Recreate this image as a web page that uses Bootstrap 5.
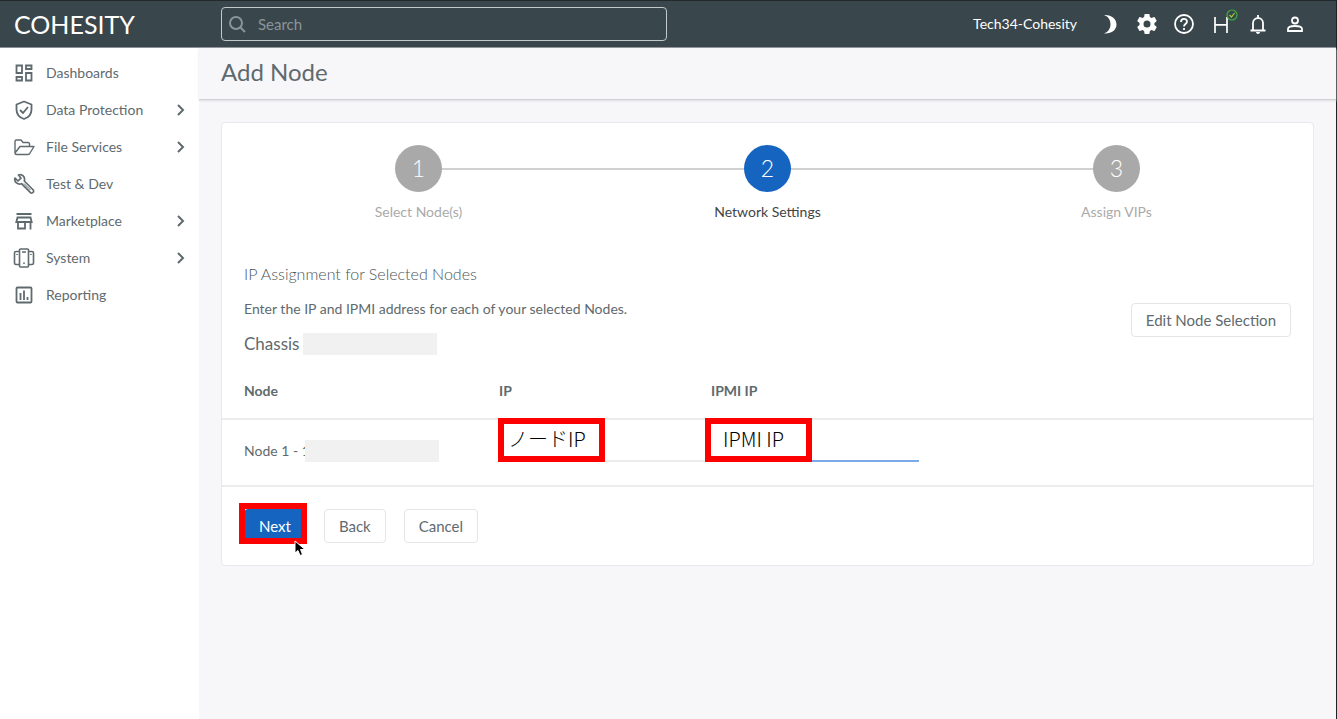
<!DOCTYPE html>
<html lang="en">
<head>
<meta charset="utf-8">
<meta name="viewport" content="width=device-width, initial-scale=1">
<title>Add Node</title>
<link href="https://cdn.jsdelivr.net/npm/bootstrap@5.3.0/dist/css/bootstrap.min.css" rel="stylesheet">
<style>
  body { font-family: Lato, "Noto Sans CJK JP", sans-serif; font-size: 14px; line-height: 20px; color: #5f6a6e; background: #f7f7fa; }
  .shell { border-right: 1px solid #222; }
  .topbar { height: 48px; background: #39464c; border-top: 1px solid #23282b; border-bottom: 1px solid #8b9095; }
  .brand-area { width: 221px; padding-left: 14px; }
  .brand-link { font-size: 25px; line-height: 32px; color: #fff; text-decoration: none; }
  .search-box { width: 446px; height: 34px; border: 1px solid #c3c8ca; border-radius: 4px; color: #8b9599; padding-left: 6px; }
  .search-box input { background: transparent; border: 0; outline: 0; color: #fff; font-size: 15px; padding: 0; }
  .search-box input::placeholder { color: #8b9599; opacity: 1; }
  .top-tools { gap: 13px; padding-right: 29px; color: #fff; }
  .tool-btn { width: 24px; height: 24px; padding: 0; border: 0; background: none; color: #fff; line-height: 0; }
  .ok-mark { top: -3px; right: -5px; }
  .sidebar { width: 199px; background: #fff; padding-top: 6px; }
  .sidebar a { height: 37px; padding: 0 10px 0 13px; color: #5f6a6e; text-decoration: none; }
  .nav-icon { width: 22px; height: 22px; margin-right: 11px; }
  .page-head { height: 52px; padding: 8px 22px; border-bottom: 1px solid #cfd1d3; box-shadow: 0 1px 2px #dcdde0; }
  .page-head h1 { font-size: 24px; line-height: 32px; margin: 0; font-weight: 400; }
  .panel { margin: 22px 22px 0; background: #fff; border: 1px solid #e9e9ec; border-radius: 4px; padding-top: 22px; }
  .steps { padding: 0 22px; list-style: none; margin: 0; }
  .steps li { flex: 1 1 0; color: #aaa; }
  .steps li::before, .steps li::after { content: ""; position: absolute; top: 23px; height: 2px; background: #d0d0d0; }
  .steps li::before { left: 0; right: 50%; }
  .steps li::after { left: 50%; right: 0; }
  .steps li:first-child::before, .steps li:last-child::after { display: none; }
  .step-dot { width: 47px; height: 47px; background: #a9a9a9; color: #fff; font-size: 23px; line-height: 24px; padding-bottom: 2px; font-weight: 300; z-index: 1; margin-bottom: 10px; }
  .steps .current { color: #3f4548; }
  .current .step-dot { background: #1565c0; }
  .intro { padding: 41px 22px 0; }
  .intro h2 { font-size: 16px; line-height: 22px; font-weight: 300; color: #4b565a; margin: 0 0 14px; }
  .intro p { margin: 0 0 14px; }
  .intro h3 { font-size: 17px; line-height: 22px; margin: 0; font-weight: 400; }
  .intro .plain-btn { margin-bottom: 18px; }
  .masked { width: 134px; height: 22px; background: #f1f1f1; }
  .masked.serial { margin-left: -5px; }
  .plain-btn { height: 34px; padding: 0 14px; background: #fff; border: 1px solid #e6e6e8; border-radius: 4px; color: #5f6a6e; font-size: 15px; }
  .next-btn { background: #1565c0; border-color: #1565c0; color: #fff; }
  .node-table { table-layout: fixed; width: 100%; margin-top: 8px; }
  .node-table th, .node-table td { border-bottom: 2px solid #ececee; padding: 0 0 0 22px; }
  .node-table th { height: 56px; font-weight: 700; }
  .node-table td { height: 67px; padding-bottom: 4px; }
  .node-table .field-col { padding-left: 0; }
  .field-col input { display: block; width: 208px; height: 42px; border: 0; border-bottom: 2px solid #ededed; outline: 0; background: none; }
  .field-col .active-field { border-bottom-color: #7caae6; }
  .callout-box { left: -1px; top: -2px; width: 107px; height: 44px; padding-left: 4px; background: #fff; border: 6px solid #f00; color: #000; font-family: "Noto Sans CJK JP", sans-serif; font-weight: 300; font-size: 20px; line-height: 30px; }
  .callout-box.ipmi { left: -6px; padding-left: 12px; }
  .callout-ring { left: -5px; top: -6px; right: -1px; bottom: -1px; border: 6px solid #f00; pointer-events: none; }
  .pointer { left: 50px; top: 31px; }
  .actions { gap: 18px; padding: 22px; }
</style>
</head>
<body>
<div class="shell min-vh-100 d-flex flex-column">
  <header class="topbar d-flex align-items-center">
    <div class="brand-area"><a class="brand-link" href="#">COHESITY</a></div>
    <label class="search-box d-flex align-items-center">
      <svg width="18" height="18" viewBox="0 0 18 18" fill="none" stroke="currentColor" stroke-width="2" aria-hidden="true"><circle cx="8" cy="8" r="6"/><path d="M12.500 12.500l4.500 4.500"/></svg>
      <input class="flex-grow-1 ms-2 ps-1" type="search" placeholder="Search" aria-label="Search">
    </label>
    <div class="top-tools d-flex align-items-center ms-auto">
      <span class="me-2">Tech34-Cohesity</span>
      <button class="tool-btn" aria-label="Theme"><svg width="24" height="24" viewBox="0 0 24 24" fill="currentColor"><path d="M6 3c7.500-.5 12.500 4 12.500 9.500S13.500 22 6 21.500c4.500-1.600 6.500-5 6.500-9.200S10.500 4.700 6 3z"/></svg></button>
      <button class="tool-btn" aria-label="Settings"><svg width="24" height="24" viewBox="0 0 24 24" fill="currentColor"><path d="M19.430 12.980c.04-.32.070-.64.070-.98s-.03-.66-.070-.98l2.110-1.650c.19-.15.240-.42.120-.64l-2-3.460c-.12-.22-.39-.3-.61-.22l-2.490 1c-.52-.4-1.080-.73-1.690-.98l-.38-2.650C14.460 2.180 14.250 2 14 2h-4c-.25 0-.46.18-.49.420l-.38 2.650c-.61.250-1.170.590-1.690.980l-2.490-1c-.23-.09-.49 0-.61.220l-2 3.460c-.13.220-.07.490.120.640l2.110 1.650c-.04.320-.07.650-.07.980s.03.660.070.980l-2.110 1.650c-.19.150-.24.420-.12.640l2 3.460c.12.220.39.300.61.220l2.490-1c.52.400 1.080.730 1.690.980l.38 2.650c.03.240.24.420.49.420h4c.25 0 .46-.18.490-.42l.38-2.650c.61-.25 1.170-.59 1.690-.98l2.490 1c.23.090.49 0 .61-.22l2-3.460c.12-.22.070-.49-.12-.64l-2.110-1.650zM12 15.500a3.500 3.500 0 1 1 0-7 3.500 3.500 0 0 1 0 7z"/></svg></button>
      <button class="tool-btn" aria-label="Help"><svg width="24" height="24" viewBox="0 0 24 24" fill="none" stroke="currentColor" stroke-width="1.800"><circle cx="12" cy="12" r="9"/><path d="M9 10c0-4 6-4 6-.5 0 2.500-3 2.500-3 5M12 16v2"/></svg></button>
      <button class="tool-btn position-relative" aria-label="Helios connected"><svg width="24" height="24" viewBox="0 0 24 24" fill="none" stroke="currentColor" stroke-width="1.700"><path d="M6 5v16M18 5v16M6 12.800h12"/></svg><svg class="ok-mark position-absolute" width="12" height="12" viewBox="0 0 12 12" fill="none" stroke="#3fae3f" stroke-width="1.200"><circle cx="6" cy="6" r="5"/><path stroke="#a5c93a" d="M3.500 6l2 2 3-4"/></svg></button>
      <button class="tool-btn" aria-label="Notifications"><svg width="24" height="24" viewBox="0 0 24 24" fill="none" stroke="currentColor" stroke-width="1.800"><path d="M4.500 18.500h15M7 18v-7c0-6.500 10-6.500 10 0v7"/><path d="M12 3v3"/><path fill="currentColor" stroke="none" d="M10 20h4c0 2.500-4 2.500-4 0z"/></svg></button>
      <button class="tool-btn" aria-label="Account"><svg width="24" height="24" viewBox="0 0 24 24" fill="none" stroke="currentColor" stroke-width="1.800"><circle cx="12" cy="8.500" r="3"/><path d="M5 19v-2c0-4 14-4 14 0v2z"/></svg></button>
    </div>
  </header>

  <div class="d-flex flex-grow-1">
    <nav class="sidebar flex-shrink-0" aria-label="Main">
      <ul class="list-unstyled m-0">
        <li><a class="d-flex align-items-center" href="#"><svg class="nav-icon" viewBox="0 0 22 22" fill="none" stroke="currentColor" stroke-width="1.800" aria-hidden="true"><path d="M3.500 3.500h5.500v7.500H3.500zM13 3.500h5.500v3.500h-5.500zM3.500 15h5.500v3.500H3.500zM13 11h5.500v7.500h-5.500z"/></svg>Dashboards</a></li>
        <li><a class="d-flex align-items-center" href="#"><svg class="nav-icon" viewBox="0 0 22 22" fill="none" stroke="currentColor" stroke-width="1.800" stroke-linejoin="round" aria-hidden="true"><path d="M11 2.500l7.500 3v5c0 4.500-3 8-7.500 9.500-4.500-1.500-7.500-5-7.500-9.500v-5z"/><path d="M7 11l3 3 5-6"/></svg>Data Protection<svg class="ms-auto" width="16" height="16" viewBox="0 0 16 16" fill="none" stroke="currentColor" stroke-width="2" aria-hidden="true"><path d="M5 3l5 5-5 5"/></svg></a></li>
        <li><a class="d-flex align-items-center" href="#"><svg class="nav-icon" viewBox="0 0 22 22" fill="none" stroke="currentColor" stroke-width="1.400" stroke-linejoin="round" aria-hidden="true"><path d="M2 17V5.500Q2 4 3.500 4h4.500l2 2.500h5q1.500 0 1.500 1.500v2.500M2 17l5-6.500h14l-4 6.500q-.5 1.500-2 1.500H3.500q-1.500 0-1.500-1.500"/></svg>File Services<svg class="ms-auto" width="16" height="16" viewBox="0 0 16 16" fill="none" stroke="currentColor" stroke-width="2" aria-hidden="true"><path d="M5 3l5 5-5 5"/></svg></a></li>
        <li><a class="d-flex align-items-center" href="#"><svg class="nav-icon" viewBox="0 0 22 22" fill="none" stroke="currentColor" stroke-width="1.700" stroke-linejoin="round" aria-hidden="true"><path d="M5.500 2C9 .5 12.500 4 11.300 8l9 9q.7 1.500-.3 2.500t-2.500.2l-9-9C5 12 .8 9 2 5l3 3 3-2.800z"/><path d="M11 10.500l6.500 6.500" stroke-width="1"/></svg>Test &amp; Dev</a></li>
        <li><a class="d-flex align-items-center" href="#"><svg class="nav-icon" viewBox="0 0 22 22" fill="none" stroke="currentColor" stroke-width="1.800" aria-hidden="true"><path d="M3.500 4h15M4.500 7.500h13L18.700 12H3.300zM5 12v6.500h7V12M17.500 12v7.500"/></svg>Marketplace<svg class="ms-auto" width="16" height="16" viewBox="0 0 16 16" fill="none" stroke="currentColor" stroke-width="2" aria-hidden="true"><path d="M5 3l5 5-5 5"/></svg></a></li>
        <li><a class="d-flex align-items-center" href="#"><svg class="nav-icon" viewBox="0 0 22 22" fill="none" stroke="currentColor" stroke-width="1.600" stroke-linejoin="round" aria-hidden="true"><rect x="6.500" y="2" width="9" height="18" rx="1"/><path d="M6 4.500H3Q1.500 4.500 1.500 6v10q0 1.500 1.500 1.500h3M16 4.500h3q1.500 0 1.500 1.500v10q0 1.500-1.500 1.500h-3M9 5h4M11 15.500v1.500M4 7v1M18 7v1"/></svg>System<svg class="ms-auto" width="16" height="16" viewBox="0 0 16 16" fill="none" stroke="currentColor" stroke-width="2" aria-hidden="true"><path d="M5 3l5 5-5 5"/></svg></a></li>
        <li><a class="d-flex align-items-center" href="#"><svg class="nav-icon" viewBox="0 0 22 22" fill="none" stroke="currentColor" stroke-width="1.800" aria-hidden="true"><rect x="3.500" y="3.500" width="15" height="15" rx="1"/><path d="M7.500 9v7M11 6.500V16M14.500 13v3"/></svg>Reporting</a></li>
      </ul>
    </nav>

    <main class="flex-grow-1">
      <div class="page-head"><h1>Add Node</h1></div>
      <section class="panel">
        <ol class="steps d-flex text-center">
          <li class="position-relative d-flex flex-column align-items-center"><span class="step-dot rounded-circle d-flex align-items-center justify-content-center">1</span>Select Node(s)</li>
          <li class="current position-relative d-flex flex-column align-items-center" aria-current="step"><span class="step-dot rounded-circle d-flex align-items-center justify-content-center">2</span>Network Settings</li>
          <li class="position-relative d-flex flex-column align-items-center"><span class="step-dot rounded-circle d-flex align-items-center justify-content-center">3</span>Assign VIPs</li>
        </ol>

        <div class="intro d-flex justify-content-between align-items-end">
          <div>
            <h2>IP Assignment for Selected Nodes</h2>
            <p>Enter the IP and IPMI address for each of your selected Nodes.</p>
            <h3 class="d-flex align-items-center">Chassis<span class="masked ms-1"></span></h3>
          </div>
          <button class="plain-btn" type="button">Edit Node Selection</button>
        </div>

        <table class="node-table">
          <colgroup><col style="width:277px"><col style="width:212px"><col></colgroup>
          <thead><tr><th scope="col">Node</th><th class="field-col" scope="col">IP</th><th class="field-col" scope="col">IPMI IP</th></tr></thead>
          <tbody><tr>
            <td><div class="d-flex align-items-center"><span>Node 1 - 1</span><span class="masked serial"></span></div></td>
            <td class="field-col align-top"><div class="position-relative"><input type="text" aria-label="IP"><div class="callout-box position-absolute">ノードIP</div></div></td>
            <td class="field-col align-top"><div class="position-relative"><input class="active-field" type="text" aria-label="IPMI IP"><div class="callout-box ipmi position-absolute">IPMI IP</div></div></td>
          </tr></tbody>
        </table>

        <div class="actions d-flex">
          <div class="position-relative">
            <button class="plain-btn next-btn" type="button">Next</button>
            <span class="callout-ring position-absolute"></span>
            <svg class="pointer position-absolute" width="12" height="17" viewBox="0 0 12 17" aria-hidden="true"><path d="M1 1v12l3-2.500 2 5 2.500-1-2-5H11z" fill="#000" stroke="#fff"/></svg>
          </div>
          <button class="plain-btn" type="button">Back</button>
          <button class="plain-btn" type="button">Cancel</button>
        </div>
      </section>
    </main>
  </div>
</div>
<script src="https://cdn.jsdelivr.net/npm/bootstrap@5.3.0/dist/js/bootstrap.bundle.min.js"></script>
</body>
</html>
